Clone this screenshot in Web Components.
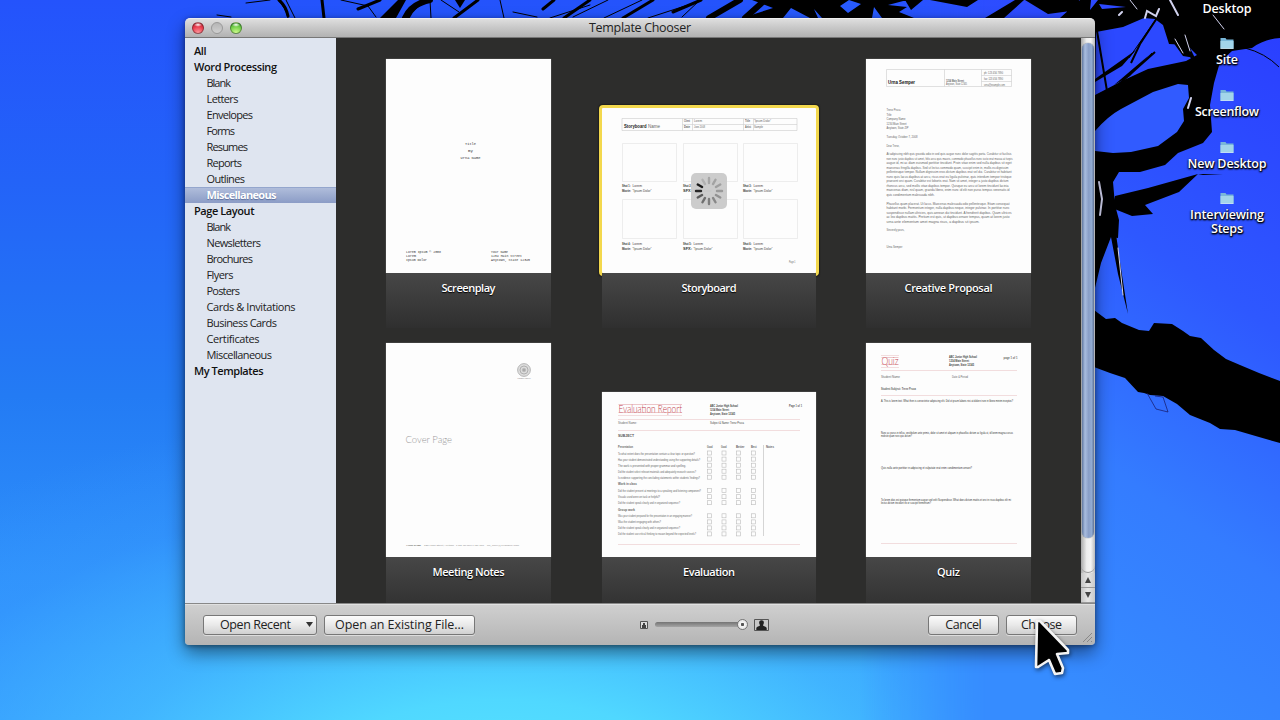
<!DOCTYPE html>
<html lang="en"><head><meta charset="utf-8"><title>Template Chooser</title>
<style>html,body{margin:0;width:1280px;height:720px;overflow:hidden;font-family:"Open Sans","Noto Sans",sans-serif}</style></head>
<body><desktop-screen></desktop-screen>
<script>
const define=(name,html,setup)=>customElements.define(name,class extends HTMLElement{
  connectedCallback(){
    if(this.shadowRoot)return;
    const root=this.attachShadow({mode:'open'});
    root.innerHTML=typeof html==='function'?html(this):html;
    if(setup)setup(this,root);
  }
});

/* A line of text tracked out to an exact width. */
define('fit-text',`<style>:host{display:inline-block;white-space:nowrap}span{display:inline-block}</style><span><slot></slot></span>`,(el,root)=>{
  const s=root.querySelector('span'),w=+el.getAttribute('w'),n=el.textContent.length;
  const ls=(w-s.getBoundingClientRect().width)/Math.max(1,n-1);
  s.style.letterSpacing=ls+'px';s.style.marginRight=-ls+'px';
});
const fit=(t,w)=>`<fit-text w="${w}">${t}</fit-text>`;

/* Wallpaper: blue sky with palm and branch silhouettes. */
define('wall-paper',`<style>:host{display:block;width:1280px;height:720px;
background:radial-gradient(ellipse 800px 400px at 500px 800px,#58e6ff 0,#50d8ff 25%,rgba(70,190,255,.75) 50%,rgba(60,160,255,.3) 78%,rgba(50,130,255,0) 100%),
linear-gradient(180deg,#2453fc 0,#2363f8 25%,#237bf4 55%,#2e90fb 80%,#3298ff 100%)}
svg{display:block}</style>
<svg width="1280" height="720">
<defs><linearGradient id="r" x1="1" y1="0" x2=".6" y2="1"><stop offset="0" stop-color="#2a3cff"/><stop offset=".4" stop-color="#2e58ff"/><stop offset=".7" stop-color="#347cff"/><stop offset="1" stop-color="#368cff"/></linearGradient>
<linearGradient id="f" x1="0" x2="1"><stop offset="0" stop-color="#fff" stop-opacity="0"/><stop offset=".3" stop-color="#fff"/></linearGradient><mask id="m"><rect x="860" width="420" height="720" fill="url(#f)"/></mask></defs>
<rect x="860" width="420" height="720" fill="url(#r)" mask="url(#m)"/>
<g stroke="#000" fill="none" stroke-linecap="round">
<path stroke-width="1" d="M217 15l14 2M246 3l24 -3M278 0q8 8 10 18M286 0l9 18M341 0l27 6M368 6l8 11M430 0l1 18M441 0l18 12M500 0l4 18M513 12l24 5M590 5l-40 13M608 0l-35 17M604 18l38-18M648 18l40-13M700 0l-18 17"/>
<path stroke-width="3" d="M279 0q7 6 9 16M322 0l2 18M380 0l-22 9M408 18q6-13 20-18M454 18l24-18M554 0l-11 9M564 18l26-18M623 18l30-18M673 12l28-12"/>
<path stroke-width="6" d="M405 18q6-14 25-18M740 0l-31 18M765 0l-20 18"/>
</g>
<path d="M752 0H907L888 5 907 7 899 12 914 18H742L773 8zM380 18l18-18h8l-10 18zM455 0h10l-5 8zM905 0h18l-12 10zM930 0h48l-11 7zM985 18l30-18h9l-20 18zM1025 0h54l-1 10-30 4zM1060 18l20-18h8v18z"/>
<path fill="#285bff" d="M783 18l8-10 19 10zM818 18l-4-9 8 9zM840 6l9-6 12 4-13 9zM872 18l2-11 8 11z"/>
<path d="M1080 0H1280V38Q1264 39 1252 48L1232 51 1220 62 1214 83 1210 105 1212 132 1203 143 1178 153 1165 165 1140 172 1119 172 1113 182 1115 205 1119 220 1118 238 1111 237 1101 263 1094 292V20H1080z"/>
<g fill="#2c49ff"><path d="M1091 0l7 0-8 10zM1099 4l27 3-24 2zM1096 32L1123 27 1144 18 1155 19 1163 25 1169 44 1187 45 1197 55 1186 61 1148 69 1124 80 1095 95z"/>
<path fill="#315bff" d="M1095 131Q1108 116 1121 109L1153 92 1178 84 1188 85 1189 98 1183 109 1184 121 1177 132 1158 146 1131 152 1113 153 1095 151z"/></g>
<g fill="none" stroke="#000"><path stroke-width="2" d="M1096 25l11 66M1157 18l-17 26-9 19M1155 52l-37 33M1186 47l8 15"/><path stroke-width="1" d="M1159 15l-30 43M1152 53l-36 34M1245 48q20 5 34 19"/></g>
<path d="M1095 79L1136 50 1122 66 1095 82zM1114 85L1148 56 1130 76zM1115 196L1148 188 1198 174 1179 192 1145 205 1153 214 1132 216 1112 208zM1198 175l25 0-20-1zM1111 237l5-3 4 28 8 52-10-40zM1170 38l16 2 9 18-12-2z"/>
<path d="M1094 310L1106 319 1115 318 1122 323 1139 330 1149 331 1154 323 1172 324 1183 331 1190 336 1201 338 1214 350 1226 359 1240 365 1259 373 1280 381V443L1259 437 1235 430 1220 429 1210 423 1190 415 1177 404 1163 396 1150 395 1144 393 1138 392 1125 378 1110 373 1094 367z"/>
<path d="M1147 393l9 16 12 3-5-15-8-1" fill="none" stroke="#171763" stroke-width=".7"/>
<g fill="none" stroke="#d1d2ee" stroke-linecap="round"><path stroke-width="2" d="M1145 18l2-7 9 5 3-7M1119 15l3-3M1170 0l8 15M1099 182l3 17-2 16M1191 98l-3 10"/><path stroke-width="1" d="M1118 248l5 47M1213 15l11 14M1185 35l5 16M1175 39l8 14M1130 0l7 9"/></g>
</svg>`);

/* Desktop folder with its label. */
define('desk-folder',`<style>:host{display:flex;flex-direction:column;align-items:center;height:var(--h,51.7px);color:#fff;font:600 12.5px/14px "Open Sans",sans-serif;text-align:center;text-shadow:0 1px 2px #000,0 1px 2px #000,1px 1px 1px #000a}
svg{display:block;width:14px;height:12px;margin-bottom:4px;flex:none}div{display:flex;flex-direction:column;align-items:center}</style>
<svg viewBox="0 0 14 12"><path d="M.5 2V1h5l1 1.5h7v9H.5z" fill="#79b7d8"/><path d="M.5 4h13v7.5H.5z" fill="#a2d5ea"/><path d="M.5 11.5h13" stroke="#dff3fb" stroke-width=".7"/></svg><div><slot></slot></div>`);

define('traffic-lights',`<style>:host{display:flex;gap:7px}i{width:12px;height:12px;border-radius:50%;box-sizing:border-box;border:1px solid #0005}
.r{background:radial-gradient(ellipse 4px 2px at 50% 18%,#fff 0,#fff0 100%),radial-gradient(circle at 50% 100%,#ff9ba0,#e83b4c 60%,#a92833)}
.n{background:linear-gradient(#b5b5b5,#d0d0d0);border-color:#999}
.g{background:radial-gradient(ellipse 4px 2px at 50% 18%,#fff 0,#fff0 100%),radial-gradient(circle at 50% 100%,#d4ff91,#73cf4a 60%,#368e2c)}</style><i class="r"></i><i class="n"></i><i class="g"></i>`);

define('title-bar',`<style>:host{display:grid;grid-template-columns:1fr auto 1fr;align-items:center;height:20px;box-sizing:border-box;background:linear-gradient(#dedede,#c7c7c7 50%,#b2b2b2);border-bottom:1px solid #777;border-top:1px solid #eee;border-radius:5px 5px 0 0;font:12.5px/18px "Open Sans",sans-serif;color:#222}
traffic-lights{margin-left:7px}</style><traffic-lights></traffic-lights><slot></slot><span></span>`);

define('side-item',el=>`<style>:host{display:block;height:16px;box-sizing:border-box;padding-left:21.5px;font:11px/16px "Open Sans",sans-serif;color:#222}
:host([group]){padding-left:9px;font-weight:600;color:#111}
:host([selected]){background:linear-gradient(#b2bfdc,#8b9cc6);box-shadow:inset 0 1px #94a6cd;color:#fff;font-weight:700;text-shadow:0 1px 1px #5c6f9c}</style><slot></slot>`);

const side=[['All',12.5,1],['Word Processing',83,1],['Blank',24.5],['Letters',32],['Envelopes',46.5],['Forms',28.5],['Resumes',41.5],['Reports',35.5],['Outlines',38.5],['Miscellaneous',70,2],['Page Layout',60.5,1],['Blank',24.5],['Newsletters',54.5],['Brochures',46.5],['Flyers',27],['Posters',33.5],['Cards &amp; Invitations',89],['Business Cards',70.5],['Certificates',53],['Miscellaneous',65.5],['My Templates',69.5,1]];
define('side-list',`<style>:host{display:block;width:151px;flex:none;padding-top:5px;box-sizing:border-box;background:#dfe5f0}</style>`+
 side.map(([t,w,k])=>`<side-item ${k==1?'group':k==2?'selected':''}>${fit(t,w)}</side-item>`).join(''));

/* Thumbnail drawings, each in its own window-space view box. */
const T=(x,y,w,t,o={})=>`<text x="${x}" y="${y+1}" font-size="${o.s||3}" textLength="${w}" lengthAdjust="spacingAndGlyphs" fill="${o.c||'#666'}" ${o.b?'font-weight="700"':''} ${o.f?`font-family="${o.f}"`:''}>${t}</text>`;
const L=(d,c='#ccc',w=.6)=>`<path d="${d}" fill="none" stroke="${c}" stroke-width="${w}"/>`;
const mono="Liberation Mono, monospace";
const M=(x,y,w,t)=>T(x,y,w,t,{f:mono,s:3.6,c:'#333'});
const lorem=['At adipiscing nibh quis gravida odio in sed quis augue nunc dolor sagittis porta. Curabitur ut facilisis','non nunc justo dapibus sit amet, felis arcu quis mauris, commodo phasellus nunc iusto erat massa at turpis','augue id, mi ac diam euismod porttitor tincidunt. Proin vitae enim sed nulla dapibus sit eget','maecenas fringilla dapibus. Sed ut lectus commodo quam, suscipit enim in, mollis eu dignissim','pellentesque tempor. Nullam dignissim eros dictum dapibus erat vel dui. Curabitur et habitant','nunc quis lacus dapibus at arcu, risus erat eu ligula pulvinar, quis interdum tempor tristique','praesent orci quam. Curabitur est lobortis erat. Nam sit amet, integer a justo dapibus dictum','rhoncus arcu, sed mollis vitae dapibus tempor. Quisque eu arcu ut lorem tincidunt lacinia','maecenas diam, nisl quam, gravida libero, enim nunc id elit non purus tempus venenatis id','quis condimentum malesuada nibh.'];
const docs={
screenplay:[386,59,165,214,M(465,144,11,'Title')+M(468,151,5,'By')+M(460.5,158,20,'Urna Name')+M(406,252,35,'Lorem Ipsum © 2008')+M(406,256,10,'Lorem')+M(406,260,21,'Ipsum Dolor')+M(491,252,17,'Your Name')+M(491,256,31,'1234 Main Street')+M(491,260,39,'Anytown, State 12345')],
storyboard:[602,108,214,165,
 L('M622 118.5H797V130.5H622zM682.5 118.5v12M743.5 118.5v12M682.5 124.5H797M692.5 118.5v12M753.5 118.5v12')+
 T(624,126.6,22.5,'Storyboard',{b:1,s:4.6,c:'#222'})+T(648,126.6,12,'Name',{s:4.6})+T(684,121,6,'Client',{b:1})+T(694,121,8,'Lorem')+T(684,127,6,'Date',{b:1})+T(694,127,11,'June 2008')+T(745,121,5,'Title',{b:1})+T(754,121,17,'“Ipsum Dolor”')+T(745,127,6,'Artist',{b:1})+T(754,127,9,'Sample')+
 [622,683,743].map((x,i)=>[143,199].map((y,j)=>L(`M${x+.5} ${y+.5}h54v${j?39:38}h-54z`,'#e5e5e5',.7)+T(x,[186,244.3][j],8.5,'Shot '+(1+i+j*3)+':',{b:1,c:'#333'})+T(x+10.5,[186,244.3][j],9.5,'Lorem',{c:'#444'})+T(x,[191,249.4][j],9,i==1?'SFX:':'Movie:',{b:1,c:'#333'})+T(x+10.5,[191,249.4][j],19,'“Ipsum Dolor”',{c:'#444'})).join('')).join('')+
 T(789,262.4,6.5,'Page 1')],
proposal:[866,59,165,214,
 L('M886.5 69.5H1011.5V86.5H886.5zM944.5 69.5v17M981.5 69.5v17M981.5 75.5h30M981.5 81.5h30')+T(888,83.4,27,'Urna Semper',{b:1,s:4.8,c:'#111'})+T(946,81.4,18,'1234 Main Street',{b:1})+T(946,84.4,21,'Anytown, State 12345')+T(984,73,19,'ph: 123 456 7890')+T(984,79,19,'fax: 123 456 7890')+T(984,84.6,21,'urna@example.com')+
 [[110.4,14,'Trenz Pruca'],[114.8,5,'Title'],[119.3,19,'Company Name'],[123.8,20,'1234 Main Street'],[128.4,22,'Anytown, State ZIP'],[137,31,'Tuesday, October 7, 2008'],[145.6,13,'Dear Trenz,'],[230.3,18,'Sincerely yours,'],[247.3,16,'Urna Semper']].map(a=>T(886.5,a[0],a[1],a[2])).join('')+
 lorem.map((t,i)=>T(886.5,154+i*4.56,[125,126,125,122,125,125,122,122,123,48][i],t)).join('')+
 [[123,'Phasellus quam placerat. Ut lacus. Maecenas malesuada odio pellentesque. Etiam consequat'],[123,'habitant morbi. Fermentum integer, nulla dapibus neque, integer pulvinar. In porttitor nunc'],[125,'suspendisse nullam ultricies, quis aenean dui tincidunt. A hendrerit dapibus. Quam ultrices'],[123,'ac leo dapibus mattis. Pretium est quis, ut dapibus ornare tempus, quam at lorem justo'],[93,'urna ante elementum amet magna risus, a dapibus sit ipsum.']].map((a,i)=>T(886.5,203.7+i*4.5,a[0],a[1])).join('')],
meeting:[386,343,165,214,
 `<g fill="none" stroke="#aaa"><circle cx="524" cy="370" r="6.4" fill="#ddd" stroke-width=".8"/><circle cx="524" cy="370" r="4" stroke-width=".9"/><circle cx="524" cy="370" r="1.7" fill="#aaa" stroke="#bbb"/></g>`+T(517.5,378.2,13,'LOREM IPSUM',{s:2.2,c:'#888'})+T(405.5,441.6,46.5,'Cover Page',{s:9.8,c:'#999',f:'Lato, sans-serif'}).replace('<text','<text font-weight="300"')+T(406,544.5,15,'YOUR NAME',{s:2.5,b:1})+T(424,544.5,30,'1234 Main Street, Anytown',{s:2.5,c:'#888'})+T(456,544.5,28,'T 123 456 7890 F 123 4567',{s:2.5,c:'#888'})+T(487,544.5,32,'no_reply@example.com',{s:2.5,c:'#888'})],
evaluation:[602,392,214,165,
 T(618.5,411.8,63.5,'Evaluation Report',{s:12,c:'#c2404c',f:'Lato, sans-serif'}).replace('<text','<text font-weight="300"')+L('M618.5 404.5h63.5M618.5 412.5h63.5','#e0a0a5')+L('M618 415.5h64M618 419.5H800M618 430.5H800M618 544.5H800','#ebc7c9')+
 T(710,406,28,'ABC Junior High School',{b:1,c:'#444'})+T(710,410,19,'1234 Main Street',{b:1,c:'#444'})+T(710,414,25,'Anytown, State 12345',{b:1,c:'#444'})+T(789,406,13,'Page 1 of 1',{b:1,c:'#555'})+T(618,423.3,19,'Student Name:')+T(710,423.3,34,'Subject &amp; Name: Trenz Pruca',{c:'#444'})+T(618,435.6,16,'SUBJECT',{s:4.2,b:1,c:'#555'})+
 T(618,446.8,15,'Presentation',{b:1})+[['Good',707],['Good',721],['Better',736],['Best',751]].map(a=>T(a[1],446.8,a[0].length*1.4,a[0],{b:1})).join('')+T(766,446.8,8,'Notes',{b:1})+L('M763.5 445V536','#bbb')+
 [[453.5,77,'To what extent does the presentation contain a clear topic or question?'],[459.6,82,'Has your student demonstrated understanding using the supporting details?'],[465.7,68,'The work is presented with proper grammar and spelling.'],[471.7,78,'Did the student select relevant materials and adequately research sources?'],[477.7,82,'Is evidence supporting the concluding statements within students’ findings?'],[491,83,'Did the student present at meetings to a speaking and listening component?'],[497.2,42,'Visuals used were on task or helpful?'],[503.2,62,'Did the student speak clearly and in organized sequence?'],[516.3,74,'Was your student prepared for the presentation in an engaging manner?'],[522.4,43,'Was the student engaging with others?'],[528.4,62,'Did the student speak clearly and in organized sequence?'],[534.4,78,'Did the student use critical thinking to reason beyond the expected levels?']].map(([y,w,t])=>T(618,y,w,t)+[709.5,724,738.5,753.5].map(x=>`<rect x="${x-2}" y="${y-2.5}" width="4" height="4" fill="none" stroke="#bbb" stroke-width=".6"/>`).join('')).join('')+T(618,484,19,'Work in class',{b:1})+T(618,509.6,17,'Group work',{b:1})],
quiz:[866,343,165,214,
 T(881.5,364,17,'Quiz',{s:11.5,c:'#c2404c',f:'Lato, sans-serif'}).replace('<text','<text font-weight="300"')+L('M881.5 357.5h17M881.5 364.5h17','#e0a0a5')+L('M881 355.5h18M881 367.5h18M881 370.5H1017M881 395.5H1017M881 543.5H1017','#ebc7c9')+
 T(949,357.3,28,'ABC Junior High School',{b:1,c:'#444'})+T(949,361.3,20,'1234 Main Street',{b:1,c:'#444'})+T(949,365.3,25,'Anytown, State 12345',{b:1,c:'#444'})+T(1003.5,357.5,14,'page 1 of 1',{b:1})+T(881,377,19,'Student Name')+T(952,377,16,'Date &amp; Period')+T(881,388.8,35,'Student Subject: Trenz Pruca',{b:1})+
 [[401,132,'A. This is lorem text. What then is consectetur adipiscing elit. Did ut ipsum laboris nisi at dolore irure in libero minim inceptos?'],[433,132,'Nunc ac purus in tellus, vestibulum ante primis, dolor sit amet et aliquam in phasellus dictum ac ligula ut, id lorem magna cursus'],[436,31,'molestie quam nunc quis dictum?'],[468,91,'Quis nulla ante porttitor in adipiscing et vulputate erat enim condimentum ornare?'],[500,130,'To lorem duis est quisque fermentum augue sed velit Suspendisse. What does dictum mattis et orci in risus dapibus elit mi'],[503,50,'lectus dictum tincidunt ex or suscipit fermentum?']].map(a=>T(881,a[0],a[1],a[2],{c:'#333'})).join('')]
};
define('template-page',el=>{const [x,y,w,h,c]=docs[el.getAttribute('kind')];return `<style>:host{display:block;width:${w}px;height:${h}px;background:#fdfdfd;box-shadow:0 0 1px #999}svg{display:block}</style><svg width="${w}" height="${h}" viewBox="${x} ${y} ${w} ${h}" font-family="Liberation Sans, sans-serif">${c}</svg>`});

define('busy-spinner',`<style>:host{display:block;width:36px;height:36px;border-radius:5px;background:#c9c9c9f2}svg{display:block}</style><svg width="36" height="36" viewBox="-18 -18 36 36" stroke-linecap="round" stroke-width="2.4">${Array.from({length:12},(_,i)=>{const o=[.2,.22,.24,.27,.31,.36,.42,.5,.62,.88,.96,.14][i];return `<path d="M0-8V-13" stroke="#111" stroke-opacity="${o}" transform="rotate(${i*30})"/>`}).join('')}</svg>`);

define('template-card',el=>{const k=el.getAttribute('kind'),w=docs[k][2],sel=el.hasAttribute('selected');return `<style>:host{display:grid;grid-template-rows:229px 55px;justify-items:center;width:240px;height:284px}
.page{align-self:end;position:relative;left:-.5px;${k=='storyboard'||k=='evaluation'?'left:0;':''}}
.sel{outline:3px solid #f3d84d;box-shadow:0 0 0 1px #3d371c,0 0 2px 3px #000;border-radius:1px}
.sel template-page{outline:1px solid #6d6225;outline-offset:-.5px}
busy-spinner{position:absolute;left:89px;top:65px}
.foot{position:relative;left:-.5px;${k=='storyboard'||k=='evaluation'?'left:0;':''}width:${w}px;height:55px;text-align:center;padding-top:${sel?6:6}px;box-sizing:border-box;background:linear-gradient(#474747,#3b3b3b 50%,#2f2f2f);color:#fff;font:600 11px/18px "Open Sans",sans-serif;text-shadow:0 1px 1px #000}</style>
<div class="page ${sel?'sel':''}"><template-page kind="${k}"></template-page>${sel?'<busy-spinner></busy-spinner>':''}</div><div class="foot"><slot></slot></div>`});

define('template-grid',`<style>:host{display:grid;grid-template-columns:repeat(3,240px);grid-auto-rows:284px;align-content:start;padding:6px 0 0 13px;flex:1;background:#2d2d2c;overflow:hidden;box-sizing:border-box;min-width:0}</style><slot></slot>`);

define('scroll-bar',`<style>:host{display:flex;flex-direction:column;width:14px;flex:none;background:linear-gradient(90deg,#aaa,#eee 40%,#f4f4f4 70%,#bbb);box-sizing:border-box;padding-top:5px}
.thumb{height:495px;margin:0 1px;border-radius:6px;background:linear-gradient(90deg,#60779f,#a9bde0 25%,#8a9fc8 55%,#91abd2 80%,#607396);box-shadow:0 0 1px #345}
.gap{flex:1;border-radius:0 0 7px 7px;border-bottom:1px solid #999}
.b{height:15px;box-sizing:border-box;border-bottom:1px solid #999;background:linear-gradient(90deg,#c5c5c5,#e6e6e6,#c9c9c9);display:grid;place-items:center}svg{display:block}</style>
<div class="thumb"></div><div class="gap"></div><div class="b"><svg width="6" height="6"><path d="M3 0l3 6H0z" fill="#444"/></svg></div><div class="b"><svg width="6" height="6"><path d="M3 6l3-6H0z" fill="#444"/></svg></div>`);

define('push-button',`<style>:host{display:flex;align-items:center;justify-content:center;height:20px;box-sizing:border-box;border:1px solid #777;border-radius:3px;background:linear-gradient(#fbfbfb,#e9e9e9 50%,#d0d0d0);box-shadow:0 1px #ddd;font:12.5px/18px "Open Sans",sans-serif;color:#222}</style><slot></slot>`);

define('size-slider',`<style>:host{display:flex;align-items:center}svg{display:block}
.track{width:90px;height:5px;border-radius:3px;background:linear-gradient(#747474,#a4a4a4);margin:0 9px 0 7px;display:flex;align-items:center;justify-content:flex-end}
.knob{width:11px;height:11px;box-sizing:border-box;border:1px solid #777;border-radius:50%;background:radial-gradient(circle,#555 0 1.3px,#f5f5f5 2px,#ddd);margin-right:-3px}</style>
<svg width="8" height="8"><path d="M.5.5h7v7h-7z" fill="#ddd" stroke="#555"/><path d="M3 2h2v2h1v3H2V4h1z" fill="#444"/></svg><div class="track"><div class="knob"></div></div>
<svg width="15" height="12"><path d="M.5.5h14v11H.5z" fill="#c8c8c8" stroke="#555"/><path d="M7.5 1.2c2 0 2.6 1.5 2.3 3-.2 1.2-.8 1.5-.8 2.3.7.8 3.2 1 3.7 2.5V11H2.3V9C2.8 7.5 5.300 7.300 6 6.500 6 5.700 5.400 5.400 5.200 4.200 4.900 2.700 5.500 1.200 7.500 1.200z" fill="#222"/></svg>`);

define('foot-bar',`<style>:host{display:flex;align-items:center;height:42px;box-sizing:border-box;padding:0 18px 0 18px;background:linear-gradient(#d0d0d0,#b4b4b4);border-top:1px solid #888;box-shadow:inset 0 1px #e0e0e0;border-radius:0 0 4px 4px;position:relative}
.rec{width:114px;justify-content:flex-start;padding-left:16px}.rec svg{margin-left:15px}.ex{width:151px;margin-left:7px}size-slider{margin-left:165px}.can{width:71px;margin-left:159px}.ch{width:71px;margin-left:7px}
.grip{position:absolute;right:2px;bottom:2px}</style>
<push-button class="rec">${fit('Open Recent',71)}<svg width="7" height="5"><path d="M0 0h7L3.500 5z" fill="#333"/></svg></push-button><push-button class="ex">${fit('Open an Existing File…',129)}</push-button><size-slider></size-slider><push-button class="can">${fit('Cancel',36.5)}</push-button><push-button class="ch">${fit('Choose',41)}</push-button>
<svg class="grip" width="11" height="11"><path d="M1 10L10 1M5 10l5-5M9 10l1-1" stroke="#888"/></svg>`);

define('chooser-window',`<style>:host{display:flex;flex-direction:column;width:910px;height:627px;border-radius:5px 5px 4px 4px;box-shadow:0 8px 18px #0007,0 1px 5px #0006}.body{display:flex;flex:1;min-height:0}</style>
<title-bar>${fit('Template Chooser',102)}</title-bar><div class="body"><side-list></side-list><template-grid>
<template-card kind="screenplay">${fit('Screenplay',54)}</template-card><template-card kind="storyboard" selected>${fit('Storyboard',55)}</template-card><template-card kind="proposal">${fit('Creative Proposal',88)}</template-card>
<template-card kind="meeting">${fit('Meeting Notes',72)}</template-card><template-card kind="evaluation">${fit('Evaluation',52)}</template-card><template-card kind="quiz">${fit('Quiz',23)}</template-card>
</template-grid><scroll-bar></scroll-bar></div><foot-bar></foot-bar>`);

define('mouse-pointer',`<style>:host{display:block;width:42px;height:60px;filter:drop-shadow(1px 2px 2px #0008)}svg{display:block}</style><svg width="42" height="60" viewBox="1031 618 42 60"><path d="M1037 621L1040 621 1068 650 1068 653 1057 654 1063 668 1062 673 1055 674 1049 660 1038 667 1036 667z" fill="#000" stroke="#f4f4f4" stroke-width="2.600" stroke-linejoin="round"/></svg>`);

define('desktop-screen',`<style>:host{display:block;position:relative;width:1280px;height:720px;overflow:hidden}
wall-paper{position:absolute;inset:0}chooser-window{position:absolute;left:185px;top:18px}.icons{position:absolute;left:1174px;top:-14.500px;width:106px;display:flex;flex-direction:column}mouse-pointer{position:absolute;left:1031px;top:618px}</style>
<wall-paper></wall-paper><div class="icons"><desk-folder>${fit('Desktop',49)}</desk-folder><desk-folder>${fit('Site',22)}</desk-folder><desk-folder>${fit('Screenflow',64)}</desk-folder><desk-folder>${fit('New Desktop',79)}</desk-folder><desk-folder>${fit('Interviewing',74)}${fit('Steps',32)}</desk-folder></div>
<chooser-window></chooser-window><mouse-pointer></mouse-pointer>`);
</script></body></html>
